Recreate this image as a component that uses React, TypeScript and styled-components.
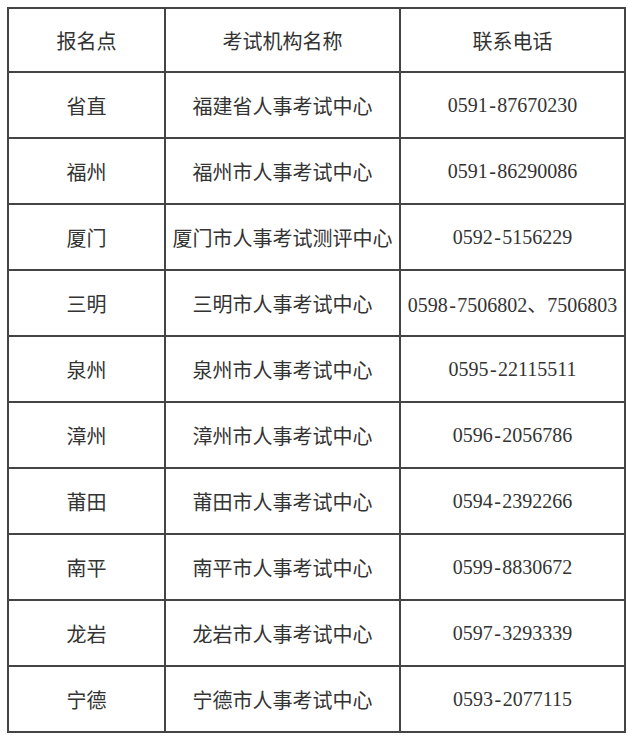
import styled, { createGlobalStyle } from 'styled-components';

const GlobalStyle = createGlobalStyle`
  html, body {
    margin: 0;
    padding: 0;
    background: #fff;
  }
`;

const rows = [
  ['省直', '福建省人事考试中心', '0591-87670230'],
  ['福州', '福州市人事考试中心', '0591-86290086'],
  ['厦门', '厦门市人事考试测评中心', '0592-5156229'],
  ['三明', '三明市人事考试中心', '0598-7506802、7506803'],
  ['泉州', '泉州市人事考试中心', '0595-22115511'],
  ['漳州', '漳州市人事考试中心', '0596-2056786'],
  ['莆田', '莆田市人事考试中心', '0594-2392266'],
  ['南平', '南平市人事考试中心', '0599-8830672'],
  ['龙岩', '龙岩市人事考试中心', '0597-3293339'],
  ['宁德', '宁德市人事考试中心', '0593-2077115'],
];

const Wrap = styled.div`
  padding: 7px 0 0 7px;
`;

const Table = styled.table`
  border-collapse: collapse;
  table-layout: fixed;
  width: 619px;
  font-family: "Liberation Serif", "Noto Sans CJK SC", serif;
  font-size: 20px;
  color: #333;
`;

const Cell = styled.td<{ $w?: number }>`
  border: 2px solid #444;
  height: 64px;
  padding: 0;
  text-align: center;
  vertical-align: middle;
  white-space: nowrap;
  width: ${(p) => (p.$w ? `${p.$w}px` : 'auto')};
`;

const Head = styled(Cell).attrs({ as: 'th' })`
  font-weight: normal;
  height: 62px;
`;

const Dash = styled.span`
  margin: 0 1.5px;
`;

function Tel({ value }: { value: string }) {
  const [area, rest] = value.split('-');
  return (
    <>
      {area}
      <Dash>-</Dash>
      {rest}
    </>
  );
}

export default function App() {
  return (
    <>
      <GlobalStyle />
      <Wrap>
        <Table>
          <thead>
            <tr>
              <Head $w={155}>报名点</Head>
              <Head $w={233}>考试机构名称</Head>
              <Head>联系电话</Head>
            </tr>
          </thead>
          <tbody>
            {rows.map(([site, org, tel]) => (
              <tr key={site}>
                <Cell>{site}</Cell>
                <Cell>{org}</Cell>
                <Cell>
                  <Tel value={tel} />
                </Cell>
              </tr>
            ))}
          </tbody>
        </Table>
      </Wrap>
    </>
  );
}
